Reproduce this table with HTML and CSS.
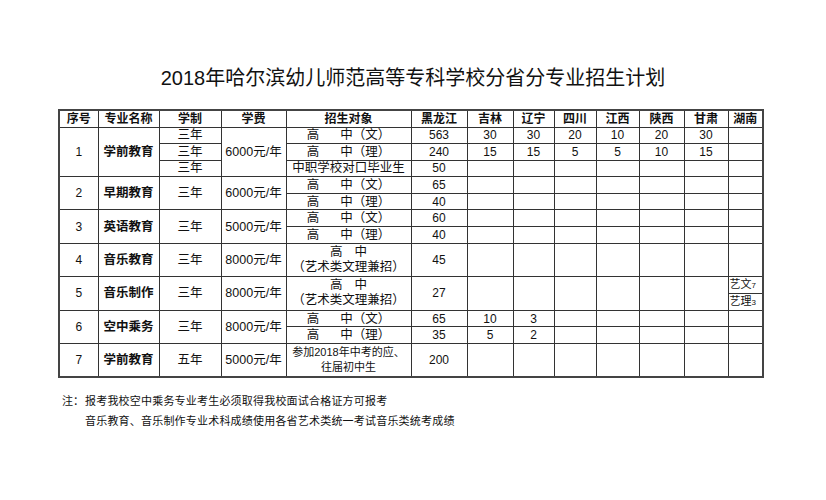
FILE: index.html
```html
<!DOCTYPE html>
<html lang="zh-CN">
<head>
<meta charset="utf-8">
<title>2018年哈尔滨幼儿师范高等专科学校分省分专业招生计划</title>
<link rel="stylesheet" href="styles.css">
</head>
<body>
<div class="page">
  <h1 class="title">2018年哈尔滨幼儿师范高等专科学校分省分专业招生计划</h1>
  <table class="plan">
    <colgroup>
      <col class="c-no"><col class="c-major"><col class="c-len"><col class="c-fee"><col class="c-target">
      <col class="c-hlj"><col class="c-jl"><col class="c-ln"><col class="c-sc"><col class="c-jx"><col class="c-sx"><col class="c-gs"><col class="c-hn">
    </colgroup>
    <thead>
      <tr class="head">
        <th>序号</th><th>专业名称</th><th>学制</th><th>学费</th><th>招生对象</th>
        <th>黑龙江</th><th>吉林</th><th>辽宁</th><th>四川</th><th>江西</th><th>陕西</th><th>甘肃</th><th>湖南</th>
      </tr>
    </thead>
    <tbody>
      <tr>
        <td rowspan="3" class="num">1</td><td rowspan="3" class="major">学前教育</td><td>三年</td><td rowspan="3">6000元/年</td>
        <td>高<span class="gap"></span>中（文）</td>
        <td class="num">563</td><td class="num">30</td><td class="num">30</td><td class="num">20</td><td class="num">10</td><td class="num">20</td><td class="num">30</td><td></td>
      </tr>
      <tr>
        <td>三年</td>
        <td>高<span class="gap"></span>中（理）</td>
        <td class="num">240</td><td class="num">15</td><td class="num">15</td><td class="num">5</td><td class="num">5</td><td class="num">10</td><td class="num">15</td><td></td>
      </tr>
      <tr>
        <td>三年</td>
        <td>中职学校对口毕业生</td>
        <td class="num">50</td><td></td><td></td><td></td><td></td><td></td><td></td><td></td>
      </tr>

      <tr>
        <td rowspan="2" class="num">2</td><td rowspan="2" class="major">早期教育</td><td rowspan="2">三年</td><td rowspan="2">6000元/年</td>
        <td>高<span class="gap"></span>中（文）</td>
        <td class="num">65</td><td></td><td></td><td></td><td></td><td></td><td></td><td></td>
      </tr>
      <tr>
        <td>高<span class="gap"></span>中（理）</td>
        <td class="num">40</td><td></td><td></td><td></td><td></td><td></td><td></td><td></td>
      </tr>

      <tr>
        <td rowspan="2" class="num">3</td><td rowspan="2" class="major">英语教育</td><td rowspan="2">三年</td><td rowspan="2">5000元/年</td>
        <td>高<span class="gap"></span>中（文）</td>
        <td class="num">60</td><td></td><td></td><td></td><td></td><td></td><td></td><td></td>
      </tr>
      <tr>
        <td>高<span class="gap"></span>中（理）</td>
        <td class="num">40</td><td></td><td></td><td></td><td></td><td></td><td></td><td></td>
      </tr>

      <tr>
        <td rowspan="2" class="num">4</td><td rowspan="2" class="major">音乐教育</td><td rowspan="2">三年</td><td rowspan="2">8000元/年</td>
        <td rowspan="2" class="two">高<span class="gap-s"></span>中<br>（艺术类文理兼招）</td>
        <td rowspan="2" class="num">45</td><td rowspan="2"></td><td rowspan="2"></td><td rowspan="2"></td><td rowspan="2"></td><td rowspan="2"></td><td rowspan="2"></td><td rowspan="2"></td>
      </tr>
      <tr></tr>

      <tr>
        <td rowspan="2" class="num">5</td><td rowspan="2" class="major">音乐制作</td><td rowspan="2">三年</td><td rowspan="2">8000元/年</td>
        <td rowspan="2" class="two">高<span class="gap-s"></span>中<br>（艺术类文理兼招）</td>
        <td rowspan="2" class="num">27</td><td rowspan="2"></td><td rowspan="2"></td><td rowspan="2"></td><td rowspan="2"></td><td rowspan="2"></td><td rowspan="2"></td>
        <td class="hn">艺文<span class="sm">7</span></td>
      </tr>
      <tr>
        <td class="hn">艺理<span class="sm">3</span></td>
      </tr>

      <tr>
        <td rowspan="2" class="num">6</td><td rowspan="2" class="major">空中乘务</td><td rowspan="2">三年</td><td rowspan="2">8000元/年</td>
        <td>高<span class="gap"></span>中（文）</td>
        <td class="num">65</td><td class="num">10</td><td class="num">3</td><td></td><td></td><td></td><td></td><td></td>
      </tr>
      <tr>
        <td>高<span class="gap"></span>中（理）</td>
        <td class="num">35</td><td class="num">5</td><td class="num">2</td><td></td><td></td><td></td><td></td><td></td>
      </tr>

      <tr>
        <td rowspan="2" class="num">7</td><td rowspan="2" class="major">学前教育</td><td rowspan="2">五年</td><td rowspan="2">5000元/年</td>
        <td rowspan="2" class="two small">参加2018年中考的应、<br>往届初中生</td>
        <td rowspan="2" class="num">200</td><td rowspan="2"></td><td rowspan="2"></td><td rowspan="2"></td><td rowspan="2"></td><td rowspan="2"></td><td rowspan="2"></td><td rowspan="2"></td>
      </tr>
      <tr></tr>
    </tbody>
  </table>
  <div class="notes">
    <div class="label">注：</div>
    <div class="lines">
      <p class="l1">报考我校空中乘务专业考生必须取得我校面试合格证方可报考</p>
      <p class="l2">音乐教育、音乐制作专业术科成绩使用各省艺术类统一考试音乐类统考成绩</p>
    </div>
  </div>
</div>
</body>
</html>
```

FILE: styles.css
```css
html, body {
  margin: 0;
  padding: 0;
  background: #ffffff;
}
body {
  font-family: "Liberation Sans", "Noto Sans CJK SC", sans-serif;
  color: #111;
}
.page {
  padding-top: 66px;
  width: 826px;
}
.title {
  margin: 0;
  font-family: "Liberation Sans", "Noto Sans CJK SC", sans-serif;
  font-weight: 400;
  font-size: 20px;
  line-height: 24px;
  text-align: center;
  color: #111;
}
.plan {
  margin: 19px 0 0 58px;
  width: 704px;
  table-layout: fixed;
  border-collapse: collapse;
  border: 2px solid #444;
  font-size: 12px;
}
.c-no { width: 39px; }
.c-major { width: 61px; }
.c-len { width: 62px; }
.c-fee { width: 65px; }
.c-target { width: 125px; }
.c-hlj { width: 56px; }
.c-jl { width: 46px; }
.c-ln { width: 41px; }
.c-sc { width: 42px; }
.c-jx { width: 43px; }
.c-sx { width: 45px; }
.c-gs { width: 44px; }
.c-hn { width: 35px; }

.plan tr { height: 16.6px; }
.plan tr.head { height: 17px; }
.plan th, .plan td {
  border: 1px solid #333;
  padding: 0;
  text-align: center;
  vertical-align: middle;
  line-height: 14px;
  white-space: nowrap;
  overflow: hidden;
}
.plan th {
  font-weight: 700;
  font-size: 12px;
}
.plan td {
  font-size: 12.5px;
}
.plan td.num {
  font-size: 12px;
}
.plan td.major {
  font-weight: 700;
  font-size: 12.5px;
}
.gap {
  display: inline-block;
  width: 21px;
}
.gap-s {
  display: inline-block;
  width: 12px;
}
.plan td.two {
  line-height: 15px;
  font-size: 12.5px;
}
.plan td.small {
  font-size: 11px;
}
.plan td.hn {
  text-align: left;
  font-size: 11px;
  padding-left: 1px;
}
.sm {
  font-size: 8px;
}
.notes {
  display: flex;
  margin: 13px 0 0 62px;
  font-size: 11px;
  line-height: 20px;
  color: #111;
}
.label {
  width: 23px;
}
.lines p {
  margin: 0;
}
.l1 {
  letter-spacing: 0.2px;
}
.l2 {
  letter-spacing: 0.2px;
}
```
